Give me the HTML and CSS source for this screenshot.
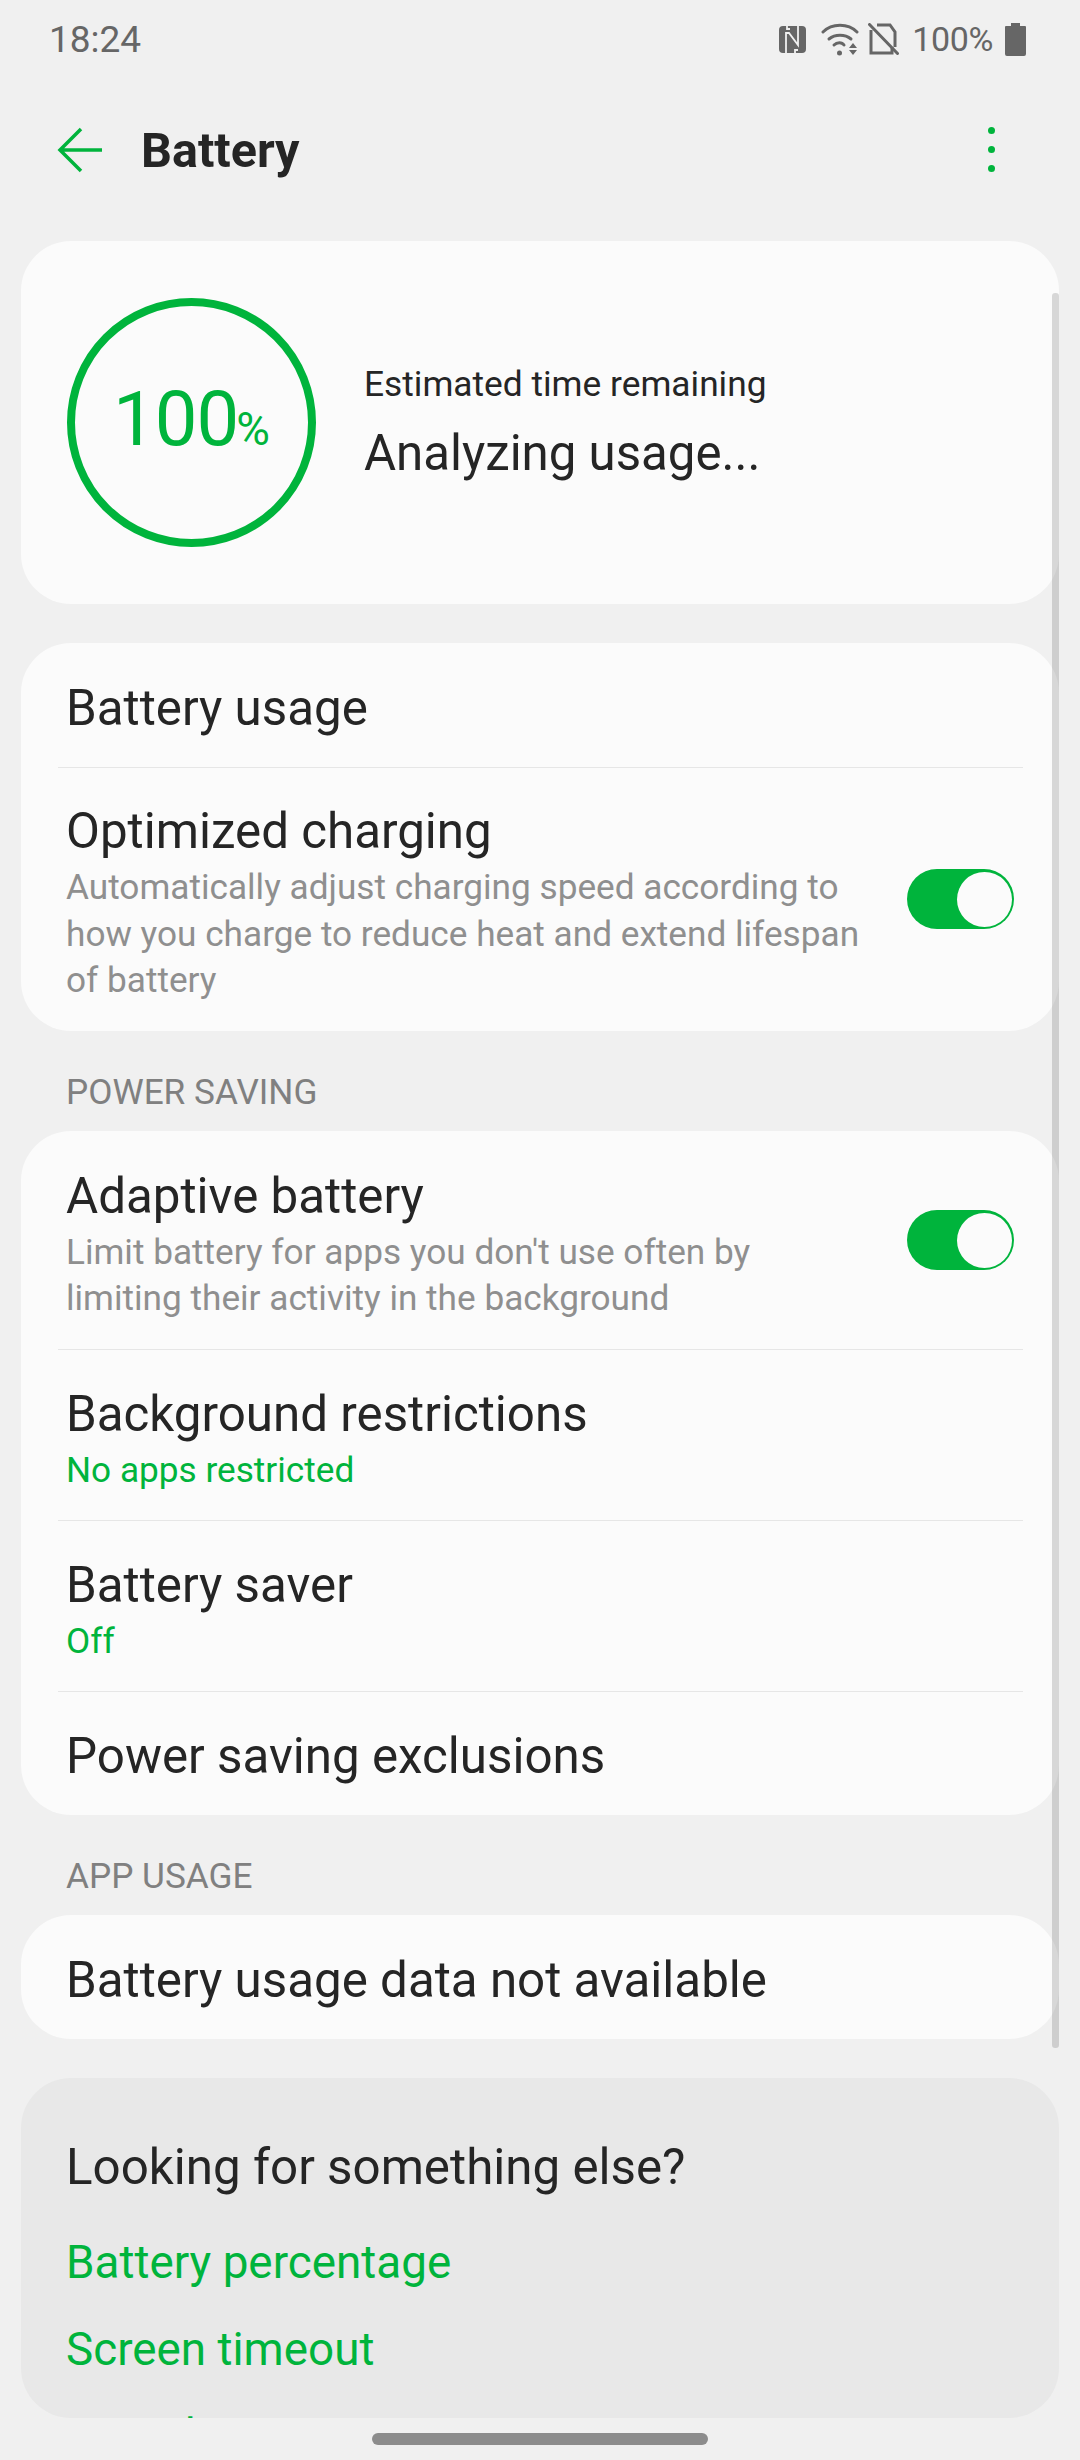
FILE: index.html
```html
<!DOCTYPE html>
<html lang="en">
<head>
    <meta charset="UTF-8">
    <meta name="viewport" content="width=device-width, initial-scale=1.0">
    <title>Battery</title>
    <link rel="stylesheet" href="styles.css">
</head>
<body>

    <div class="screen">
        <!-- Status bar -->
        <div class="status-bar">
            <span class="clock">18:24</span>
            <div class="status-icons">
                <svg class="icon-nfc" width="27" height="27" viewBox="0 0 27 27">
                    <rect width="27" height="27" rx="4" fill="#666"/>
                    <path fill="none" stroke="#f0f0f0" stroke-width="1.800" d="M7 27V7h3l9 12V0M8 0v3h3M19 24h-3v3"/>
                </svg>
                <svg class="icon-wifi" width="38" height="33" viewBox="0 0 38 33">
                    <g fill="none" stroke="#666" stroke-width="3" stroke-linecap="round">
                        <path d="M2 9C11 0 27 0 36 9"/>
                        <path d="M8 16c6-5 16-5 22 0"/>
                        <path d="M13 22c3-3 8-3 10 0"/>
                    </g>
                    <circle cx="18.500" cy="30" r="2.500" fill="#666"/>
                    <path fill="#666" d="M32 20l4 5h-8zM28 27h8l-4 5z"/>
                </svg>
                <svg class="icon-sim" width="31" height="32" viewBox="0 0 31 32">
                    <g fill="none" stroke="#666" stroke-width="3">
                        <path d="M3 7v23h21v-6M9 2h13l5 7v15"/>
                        <path stroke-linecap="round" d="M1.500 1.500l28 29"/>
                    </g>
                </svg>
                <span class="status-pct">100%</span>
                <svg class="icon-battery" width="21" height="33" viewBox="0 0 21 33">
                    <path fill="#666" d="M6 0h9v3h5a1 1 0 0 1 1 1v27a2 2 0 0 1-2 2H2a2 2 0 0 1-2-2V4a1 1 0 0 1 1-1h5z"/>
                </svg>
            </div>
        </div>

        <!-- Action bar -->
        <div class="action-bar">
            <svg class="back-arrow" width="45" height="46" viewBox="0 0 45 46">
                <path fill="none" stroke="#00b43c" stroke-width="3.500" d="M24 2L3 23l21 21M3 23h42"/>
            </svg>
            <h1 class="title">Battery</h1>
            <div class="more-dots">
                <span></span><span></span><span></span>
            </div>
        </div>

        <div class="content">
            <!-- Battery summary -->
            <section class="card summary">
                <div class="ring">
                    <span class="ring-num">100</span><span class="ring-pct">%</span>
                </div>
                <div class="summary-text">
                    <div class="est-label">Estimated time remaining</div>
                    <div class="est-value">Analyzing usage...</div>
                </div>
            </section>

            <section class="card">
                <div class="row row-single">
                    <div class="row-title">Battery usage</div>
                </div>
                <div class="row row-charging">
                    <div class="row-text">
                        <div class="row-title">Optimized charging</div>
                        <div class="row-sub">Automatically adjust charging speed according to how you charge to reduce heat and extend lifespan of battery</div>
                    </div>
                    <div class="toggle"><span class="knob"></span></div>
                </div>
            </section>

            <div class="section-label">POWER SAVING</div>
            <section class="card">
                <div class="row row-adaptive">
                    <div class="row-text">
                        <div class="row-title">Adaptive battery</div>
                        <div class="row-sub">Limit battery for apps you don't use often by limiting their activity in the background</div>
                    </div>
                    <div class="toggle"><span class="knob"></span></div>
                </div>
                <div class="row row-double">
                    <div class="row-text">
                        <div class="row-title">Background restrictions</div>
                        <div class="row-status">No apps restricted</div>
                    </div>
                </div>
                <div class="row row-double">
                    <div class="row-text">
                        <div class="row-title">Battery saver</div>
                        <div class="row-status">Off</div>
                    </div>
                </div>
                <div class="row row-single">
                    <div class="row-title">Power saving exclusions</div>
                </div>
            </section>

            <div class="section-label">APP USAGE</div>
            <section class="card">
                <div class="row row-single">
                    <div class="row-title">Battery usage data not available</div>
                </div>
            </section>

            <!-- Suggestions, cut off by the bottom edge of the list -->
            <section class="suggest">
                <div class="suggest-title">Looking for something else?</div>
                <div class="suggest-link">Battery percentage</div>
                <div class="suggest-link">Screen timeout</div>
                <div class="suggest-link">Sound</div>
            </section>
        </div>

        <div class="scrollbar"></div>
        <div class="home-pill"></div>
    </div>

</body>
</html>
```

FILE: styles.css
```css
/* Basic Styling */
* {
    box-sizing: border-box;
}

body {
    margin: 0;
    background-color: #f0f0f0;
    font-family: Roboto, "Noto Sans", sans-serif;
    color: #252525;
}

.screen {
    position: relative;
    width: 1080px;
    height: 2460px;
    overflow: hidden;
}

/* Status bar */
.status-bar {
    height: 78px;
    padding: 0 54px 0 49px;
    display: flex;
    justify-content: space-between;
    align-items: center;
    color: #666;
}

.clock {
    font-size: 37px;
}

.status-icons {
    display: flex;
    align-items: center;
}

.icon-nfc {
    margin-right: 15px;
}

.icon-wifi {
    margin-right: 9px;
}

.icon-sim {
    margin-right: 13px;
}

.status-pct {
    font-size: 34px;
    letter-spacing: -0.4px;
    margin-right: 12px;
}

/* Action bar */
.action-bar {
    height: 143px;
    padding: 0 85px 0 57px;
    display: flex;
    align-items: center;
}

.back-arrow {
    margin-right: 39px;
}

.title {
    margin: 0;
    padding-top: 2px;
    flex: 1;
    font-size: 48.500px;
    font-weight: 700;
}

.more-dots {
    display: flex;
    flex-direction: column;
    gap: 12px;
}

.more-dots span {
    width: 7px;
    height: 7px;
    border-radius: 50%;
    background-color: #00b43c;
}

/* List */
.content {
    height: 2197px;
    padding: 20px 21px 0;
    overflow: hidden;
}

.card {
    background-color: #fbfbfb;
    border-radius: 50px;
    margin-bottom: 39px;
}

.summary {
    height: 363px;
    padding: 0 46px;
    display: flex;
    align-items: center;
}

.ring {
    flex: none;
    width: 249px;
    height: 249px;
    border: 8px solid #00b43c;
    border-radius: 50%;
    margin-right: 48px;
    display: flex;
    justify-content: center;
    align-items: baseline;
    padding-top: 68px;
    color: #00b43c;
}

.ring-num {
    font-size: 76px;
    letter-spacing: -1px;
    line-height: 90px;
}

.ring-pct {
    margin-left: -2px;
    font-size: 46px;
}

.est-label {
    font-size: 35.300px;
    margin-bottom: 19px;
}

.est-value {
    font-size: 49.200px;
}

.row {
    position: relative;
    padding: 0 45px;
    display: flex;
    align-items: center;
}

/* Divider sits under every row except the last */
.row:not(:last-child)::after {
    content: "";
    position: absolute;
    left: 37px;
    right: 36px;
    bottom: -1px;
    height: 1px;
    background-color: #e6e6e6;
}

.row-single {
    height: 124px;
    padding-top: 5px;
}

.row-charging {
    height: 264px;
}

.row-adaptive {
    height: 218px;
}

.row-double {
    height: 171px;
}

.row-text {
    flex: 1;
    padding: 4px 41px 0 0;
}

.row-title {
    font-size: 49.300px;
    line-height: 66px;
}

.row-sub {
    font-size: 35.200px;
    line-height: 46.500px;
    color: #8f8f8f;
}

.row-status {
    font-size: 35.200px;
    line-height: 46px;
    color: #00b43c;
}

.toggle {
    position: relative;
    flex: none;
    width: 107px;
    height: 60px;
    border-radius: 30px;
    background-color: #00b43c;
}

.knob {
    position: absolute;
    top: 2.500px;
    right: 2px;
    width: 55px;
    height: 55px;
    border-radius: 50%;
    background-color: #fbfbfb;
}

.section-label {
    margin: 0 0 17px 45px;
    font-size: 35.200px;
    line-height: 44px;
    color: #808080;
}

/* Suggestions card */
.suggest {
    height: 340px;
    padding: 60px 45px 0;
    overflow: hidden;
    background-color: #e8e8e8;
    border-radius: 50px;
}

.suggest-title {
    font-size: 49.300px;
    line-height: 58px;
    margin-bottom: 41px;
}

.suggest-link {
    font-size: 45.800px;
    line-height: 52px;
    margin-bottom: 34.500px;
    color: #00b43c;
}

/* Overlays */
.scrollbar {
    position: absolute;
    left: 1052px;
    top: 293px;
    width: 7px;
    height: 1755px;
    border-radius: 3px;
    background-color: rgba(0, 0, 0, 0.14);
}

.home-pill {
    position: absolute;
    left: 372px;
    top: 2433px;
    width: 336px;
    height: 12px;
    border-radius: 6px;
    background-color: #8c8c8c;
}
```
